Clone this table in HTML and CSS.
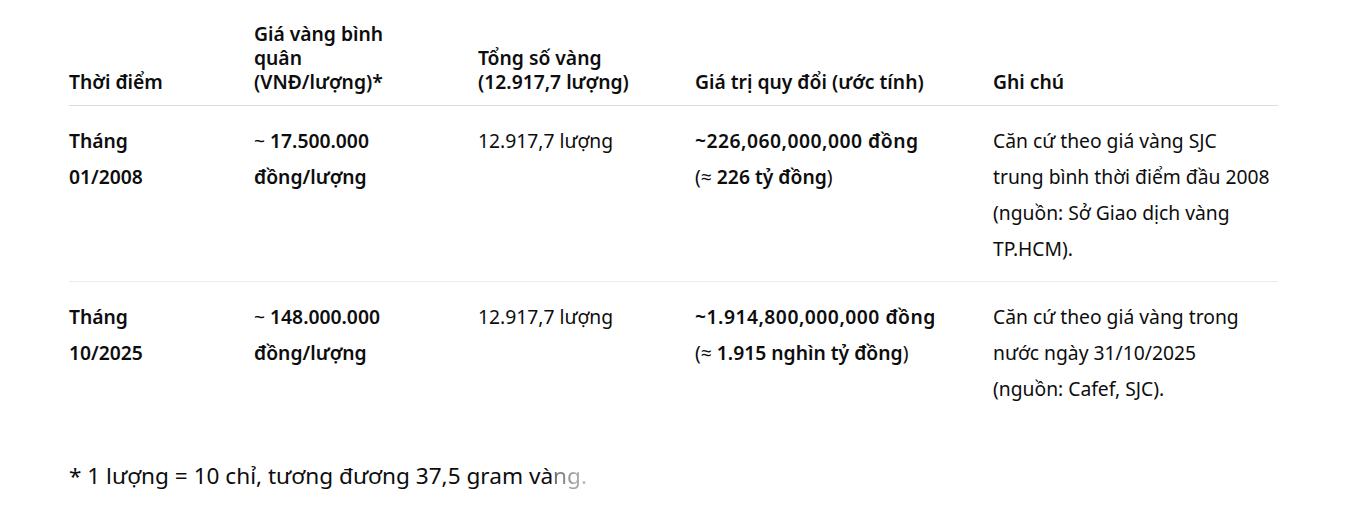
FILE: index.html
```html
<!DOCTYPE html>
<html lang="vi">
<head>
<meta charset="utf-8">
<title>Giá vàng</title>
<link rel="stylesheet" href="styles.css">
</head>
<body>
<main class="content">
  <table class="gold-table">
    <colgroup>
      <col class="c1"><col class="c2"><col class="c3"><col class="c4"><col class="c5">
    </colgroup>
    <thead>
      <tr>
        <th>Thời điểm</th>
        <th>Giá vàng bình<br>quân<br>(VNĐ/lượng)*</th>
        <th>Tổng số vàng<br>(12.917,7 lượng)</th>
        <th>Giá trị quy đổi (ước tính)</th>
        <th>Ghi chú</th>
      </tr>
    </thead>
    <tbody>
      <tr>
        <td><strong>Tháng<br>01/2008</strong></td>
        <td>~ <strong>17.500.000<br>đồng/lượng</strong></td>
        <td>12.917,7 lượng</td>
        <td><strong class="num">~226,060,000,000 đồng</strong><br>(≈ <strong>226 tỷ đồng</strong>)</td>
        <td>Căn cứ theo giá vàng SJC<br>trung bình thời điểm đầu 2008<br>(nguồn: Sở Giao dịch vàng<br>TP.HCM).</td>
      </tr>
      <tr>
        <td><strong>Tháng<br>10/2025</strong></td>
        <td>~ <strong>148.000.000<br>đồng/lượng</strong></td>
        <td>12.917,7 lượng</td>
        <td><strong class="num">~1.914,800,000,000 đồng</strong><br>(≈ <strong>1.915 nghìn tỷ đồng</strong>)</td>
        <td>Căn cứ theo giá vàng trong<br>nước ngày 31/10/2025<br>(nguồn: Cafef, SJC).</td>
      </tr>
    </tbody>
  </table>
  <p class="footnote">* 1 lượng = 10 chỉ, tương đương 37,5 gram và<span class="fade">ng.</span></p>
</main>
</body>
</html>
```

FILE: styles.css
```css
* { box-sizing: border-box; }
html, body { margin: 0; padding: 0; background: #ffffff; }
body {
  font-family: "Noto Sans", "Open Sans", "DejaVu Sans", sans-serif;
  color: #0d0d0d;
}
.content {
  padding: 22px 68px 0 69px;
}
.gold-table {
  border-collapse: collapse;
  table-layout: fixed;
  width: 1209px;
}
.c1 { width: 185px; }
.c2 { width: 224px; }
.c3 { width: 217px; }
.c4 { width: 298px; }
.c5 { width: 285px; }
.gold-table th {
  text-align: left;
  vertical-align: bottom;
  font-weight: 600;
  font-size: 19.3px;
  line-height: 24px;
  padding: 0 0 11px 0;
  border-bottom: 1px solid #dcdcdc;
  white-space: nowrap;
}
.gold-table td {
  vertical-align: top;
  font-size: 19.3px;
  line-height: 36px;
  padding: 17px 0 14px 0;
  white-space: nowrap;
}
.gold-table tbody tr + tr td { border-top: 1px solid #ececec; }
.gold-table strong { font-weight: 600; }
.gold-table .num { letter-spacing: 0.5px; }
.footnote {
  margin: 42px 0 0 0;
  font-size: 22.6px;
  line-height: 26px;
}
.fade {
  background: linear-gradient(90deg, #6a6a6a, #c4c4c4);
  -webkit-background-clip: text;
  background-clip: text;
  color: transparent;
}
```
